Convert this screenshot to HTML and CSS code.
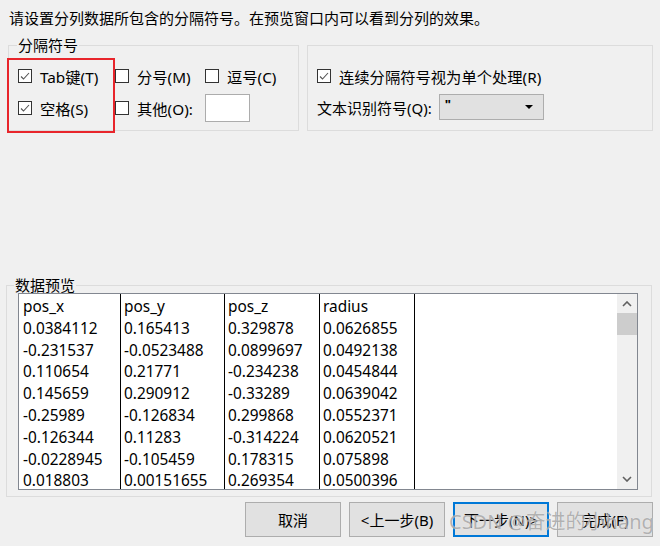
FILE: index.html
```html
<!DOCTYPE html>
<html>
<head>
  <meta charset="UTF-8">
  <title>文本分列向导</title>
  <link rel="stylesheet" href="styles.css">
</head>
<body>
  <div class="dialog">
    <p class="intro">请设置分列数据所包含的分隔符号。在预览窗口内可以看到分列的效果。</p>

    <div class="options">
      <fieldset class="group delimiters">
        <legend>分隔符号</legend>
        <div class="delim-grid">
          <label class="check"><span class="box"><svg viewBox="0 0 12 12"><polyline points="2,6.5 4.5,9 10,3"/></svg></span>Tab键(T)</label>
          <label class="check"><span class="box"></span>分号(M)</label>
          <label class="check"><span class="box"></span>逗号(C)</label>
          <label class="check"><span class="box"><svg viewBox="0 0 12 12"><polyline points="2,6.5 4.5,9 10,3"/></svg></span>空格(S)</label>
          <label class="check"><span class="box"></span>其他(O):</label>
          <span class="textbox"></span>
        </div>
      </fieldset>

      <div class="group extra">
        <label class="check"><span class="box"><svg viewBox="0 0 12 12"><polyline points="2,6.5 4.5,9 10,3"/></svg></span>连续分隔符号视为单个处理(R)</label>
        <div class="qualifier">
          <span>文本识别符号(Q):</span>
          <span class="combo"><span class="combo-value">"</span><svg class="combo-arrow" viewBox="0 0 8 4"><polygon points="0,0 8,0 4,4"/></svg></span>
        </div>
      </div>
    </div>

    <fieldset class="group preview">
      <legend>数据预览</legend>
      <div class="listbox">
        <div class="columns">
          <div class="col c1">
            <div>pos_x</div><div>0.0384112</div><div>-0.231537</div><div>0.110654</div><div>0.145659</div><div>-0.25989</div><div>-0.126344</div><div>-0.0228945</div><div>0.018803</div>
          </div>
          <div class="col c2">
            <div>pos_y</div><div>0.165413</div><div>-0.0523488</div><div>0.21771</div><div>0.290912</div><div>-0.126834</div><div>0.11283</div><div>-0.105459</div><div>0.00151655</div>
          </div>
          <div class="col c3">
            <div>pos_z</div><div>0.329878</div><div>0.0899697</div><div>-0.234238</div><div>-0.33289</div><div>0.299868</div><div>-0.314224</div><div>0.178315</div><div>0.269354</div>
          </div>
          <div class="col c4">
            <div>radius</div><div>0.0626855</div><div>0.0492138</div><div>0.0454844</div><div>0.0639042</div><div>0.0552371</div><div>0.0620521</div><div>0.075898</div><div>0.0500396</div>
          </div>
        </div>
        <div class="scrollbar">
          <svg class="arrow" viewBox="0 0 10 6"><polyline points="1,5 5,1 9,5"/></svg>
          <div class="thumb"></div>
          <div class="track"></div>
          <svg class="arrow" viewBox="0 0 10 6"><polyline points="1,1 5,5 9,1"/></svg>
        </div>
      </div>
    </fieldset>

    <div class="buttons">
      <button>取消</button>
      <button>&lt;上一步(B)</button>
      <button class="default">下一步(N)&gt;</button>
      <button>完成(F)</button>
    </div>

    <!-- annotation + watermark drawn over the dialog -->
    <div class="highlight"></div>
    <div class="watermark">CSDN @奋进的小hang</div>
  </div>
</body>
</html>
```

FILE: styles.css
```css
body {
  margin: 0;
  padding: 0;
  background-color: #f0f0f0;
  font-family: "Noto Sans", "Noto Sans CJK SC", sans-serif;
  font-size: 15px;
  color: #000;
}
.dialog {
  position: relative;
  width: 660px;
  height: 546px;
  overflow: hidden;
}
.intro {
  margin: 8px 0 0 9px;
  line-height: 20px;
  height: 20px;
}
.options {
  display: flex;
  gap: 8px;
  margin: 7px 0 0 8px;
  align-items: flex-start;
}
.group {
  border: 1px solid #dcdcdc;
  margin: 0;
  padding: 0;
  min-width: 0;
}
.group legend {
  line-height: 20px;
  padding: 0 1px;
  margin-left: -1px;
}
.delimiters {
  width: 291px;
  box-sizing: border-box;
  padding: 5px 0 6px 9px;
}
.delim-grid {
  display: grid;
  grid-template-columns: 97px 90px auto;
  grid-auto-rows: 32px;
  align-items: center;
}
.check {
  display: flex;
  align-items: center;
  gap: 8px;
  white-space: nowrap;
  font-size: 15.3px;
}
.box {
  width: 12px;
  height: 12px;
  border: 1px solid #333;
  background-color: #fff;
  display: flex;
}
.box svg {
  width: 12px;
  height: 12px;
  fill: none;
  stroke: #555;
  stroke-width: 1.1;
}
.textbox {
  width: 43px;
  height: 26px;
  border: 1px solid #acacac;
  background-color: #fff;
}
.extra {
  width: 346px;
  height: 86px;
  box-sizing: border-box;
  margin-top: 10px;
  padding: 14px 0 0 9px;
}
.extra .check {
  height: 32px;
}
.qualifier {
  display: flex;
  align-items: center;
  gap: 7px;
  margin-top: 1px;
  height: 28px;
}
.combo {
  width: 103px;
  height: 24px;
  border: 1px solid #adadad;
  background-color: #e1e1e1;
  display: flex;
  align-items: flex-start;
  justify-content: space-between;
}
.combo-value {
  font-size: 13px;
  font-weight: bold;
  line-height: 18px;
  margin-left: 5px;
}
.combo-arrow {
  width: 8px;
  height: 4px;
  margin: 10px 10px 0 0;
}
.preview {
  width: 646px;
  box-sizing: border-box;
  margin: 146px 0 0 6px;
  padding: 0 13px 6px 11px;
}
.preview legend {
  line-height: 16px;
  margin-left: -4px;
}
.listbox {
  height: 197px;
  box-sizing: border-box;
  border: 1px solid #828790;
  background-color: #fff;
  display: flex;
  justify-content: space-between;
  overflow: hidden;
}
.columns {
  display: flex;
  padding-top: 2px;
}
.col {
  border-right: 1px solid #000;
  line-height: 21.8px;
  font-size: 15.4px;
  white-space: nowrap;
  margin-top: -2px;
  padding-top: 2px;
}
.c1 { width: 97px; padding-left: 4px; }
.c2 { width: 100px; padding-left: 3px; }
.c3 { width: 91px; padding-left: 3px; }
.c4 { width: 91px; padding-left: 3px; }
.scrollbar {
  width: 20px;
  background-color: #f0f0f0;
  display: flex;
  flex-direction: column;
  align-items: center;
}
.scrollbar .arrow {
  width: 10px;
  height: 6px;
  fill: none;
  stroke: #606060;
  stroke-width: 1.6;
  margin: 7px 0;
}
.thumb {
  width: 20px;
  height: 22px;
  background-color: #cdcdcd;
  margin-top: -1px;
}
.track {
  flex: 1;
}
.buttons {
  display: flex;
  justify-content: flex-end;
  gap: 8px;
  margin: 5px 7px 0 0;
}
button {
  width: 96px;
  height: 35px;
  border: 1px solid #adadad;
  background-color: #e1e1e1;
  font-family: inherit;
  font-size: 15px;
  color: #000;
  padding: 0;
}
button.default {
  border: 2px solid #0078d7;
}
.highlight {
  position: absolute;
  left: 7px;
  top: 58px;
  width: 104px;
  height: 71px;
  border: 2px solid #e8252b;
}
.watermark {
  position: absolute;
  left: 449px;
  top: 508px;
  font-size: 20px;
  line-height: 28px;
  color: rgba(130, 130, 130, 0.6);
  text-shadow: 0 0 1px rgba(255, 255, 255, 0.8);
  white-space: nowrap;
}
```
